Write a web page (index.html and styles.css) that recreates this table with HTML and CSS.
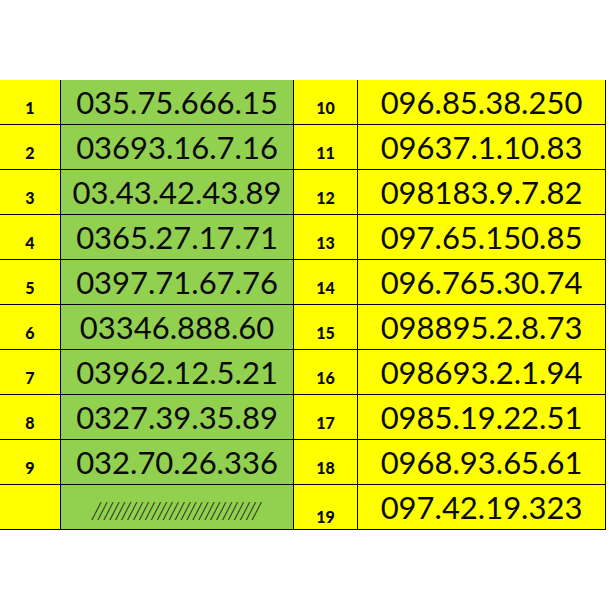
FILE: index.html
```html
<!DOCTYPE html>
<html lang="vi">
<head>
<meta charset="utf-8">
<title>Sim số đẹp</title>
<link rel="stylesheet" href="styles.css">
</head>
<body>
<div class="sheet">
  <div class="idx">1</div><div class="num green">035.75.666.15</div><div class="idx">10</div><div class="num">096.85.38.250</div>
  <div class="idx">2</div><div class="num green">03693.16.7.16</div><div class="idx">11</div><div class="num">09637.1.10.83</div>
  <div class="idx">3</div><div class="num green">03.43.42.43.89</div><div class="idx">12</div><div class="num">098183.9.7.82</div>
  <div class="idx">4</div><div class="num green">0365.27.17.71</div><div class="idx">13</div><div class="num">097.65.150.85</div>
  <div class="idx">5</div><div class="num green">0397.71.67.76</div><div class="idx">14</div><div class="num">096.765.30.74</div>
  <div class="idx">6</div><div class="num green">03346.888.60</div><div class="idx">15</div><div class="num">098895.2.8.73</div>
  <div class="idx">7</div><div class="num green">03962.12.5.21</div><div class="idx">16</div><div class="num">098693.2.1.94</div>
  <div class="idx">8</div><div class="num green">0327.39.35.89</div><div class="idx">17</div><div class="num">0985.19.22.51</div>
  <div class="idx">9</div><div class="num green">032.70.26.336</div><div class="idx">18</div><div class="num">0968.93.65.61</div>
  <div class="idx last"></div><div class="num green slashes">////////////////////////////</div><div class="idx last">19</div><div class="num">097.42.19.323</div>
</div>
</body>
</html>
```

FILE: styles.css
```css
html, body {
  margin: 0;
  padding: 0;
  background: #ffffff;
}

body {
  padding-top: 80px;
  font-family: "Lato", "Liberation Sans", sans-serif;
  color: #0a0a0a;
}

.sheet {
  display: grid;
  grid-template-columns: 60px 232px 63px 247px;
  grid-auto-rows: 44px;
  gap: 1px;
  padding: 0 1px 1px 0;
  width: max-content;
  background: #000;
}

.idx {
  background: #ffff00;
  display: flex;
  align-items: flex-end;
  justify-content: center;
  font-weight: 900;
  font-size: 16px;
  line-height: 16px;
  padding-bottom: 8px;
  box-sizing: border-box;
}

.idx.last {
  padding-bottom: 4px;
}

.num {
  background: #ffff00;
  display: flex;
  align-items: center;
  justify-content: center;
  font-size: 31px;
  line-height: 31px;
}

.num.green {
  background: #92d050;
}

.num.slashes {
  font-size: 24px;
  line-height: 24px;
  font-style: italic;
  font-weight: 300;
  letter-spacing: 0.8px;
  padding-top: 5px;
  box-sizing: border-box;
}
```
